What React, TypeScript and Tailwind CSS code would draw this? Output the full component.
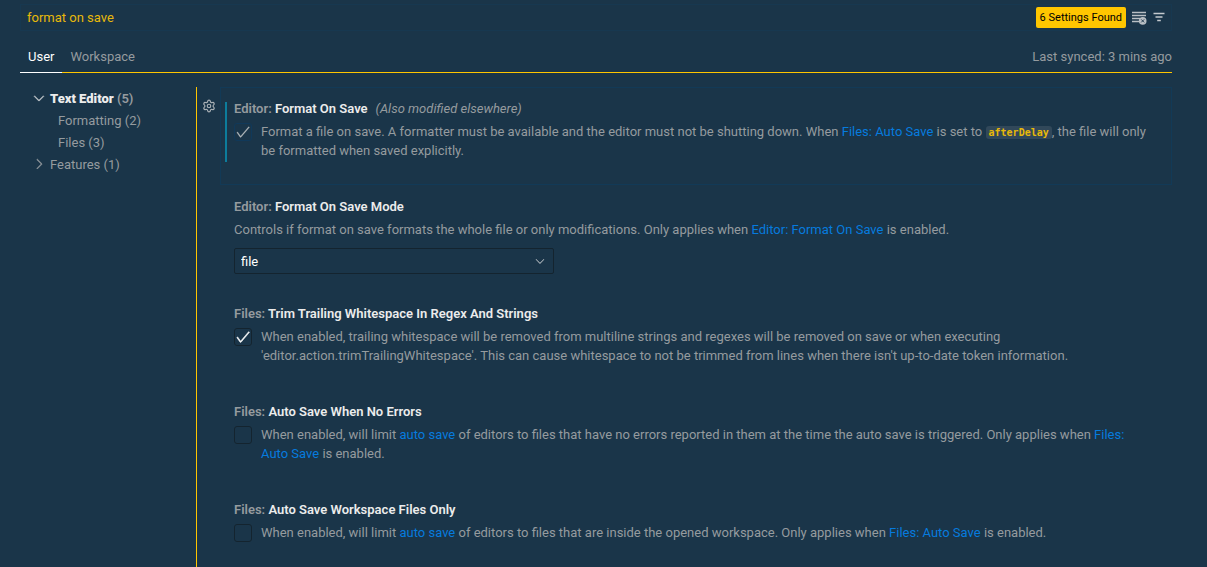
import { useState, type ReactNode } from "react";
import { Settings } from "lucide-react";
import { VscCheck, VscChevronDown, VscChevronRight } from "react-icons/vsc";

function ClearResultsIcon() {
  return (
    <svg width="16" height="16" viewBox="0 0 16 16" fill="none" stroke="currentColor" strokeWidth="1.3">
      <path d="M1 2.5h14M1 5.5h14M1 8.5h8M1 11.5h7" />
      <circle cx="11.7" cy="10.9" r="3.8" fill="currentColor" stroke="none" />
      <path d="M10.2 9.4l3 3M13.2 9.4l-3 3" stroke="#1a3549" strokeWidth="0.9" />
    </svg>
  );
}

function FilterLinesIcon() {
  return (
    <svg width="16" height="16" viewBox="0 0 16 16" fill="none" stroke="currentColor" strokeWidth="1.6">
      <path d="M2.5 3.5h11M4.5 7h7M6.2 10.5h3.6" />
    </svg>
  );
}

function Link({ children }: { children: ReactNode }) {
  return (
    <a href="#" className="text-[#067bde] hover:underline">
      {children}
    </a>
  );
}

function Title({ group, name, note }: { group: string; name: string; note?: string }) {
  return (
    <h3 className="whitespace-nowrap font-semibold text-[#959b9f]">
      {group}: <span className="text-[#ececec]">{name}</span>
      {note && <em className="ml-2 font-normal text-[#959b9f]">{note}</em>}
    </h3>
  );
}

type CheckSettingProps = {
  id: string;
  group: string;
  name: string;
  note?: string;
  initial?: boolean;
  focused?: boolean;
  children: ReactNode;
};

function CheckSetting({ id, group, name, note, initial = false, focused = false, children }: CheckSettingProps) {
  const [checked, setChecked] = useState(initial);
  const box = focused ? "border-[#10395a]" : "border-[#14242f]";
  const tick = focused ? "text-[#b9bdc0]" : "text-white";
  return (
    <section
      className={
        focused
          ? "relative border border-[#123a57] pt-[11px] pr-5 pb-6 pl-[13px]"
          : "relative border-x border-transparent pt-3 pr-5 pb-[25px] pl-[13px]"
      }
    >
      {focused && <span className="absolute top-[14px] left-1 h-15 w-[2px] bg-[#0c7d9d]" />}
      <Title group={group} name={name} note={note} />
      <div className="mt-1 flex gap-[9px]">
        <span className="mt-px grid size-[18px] shrink-0">
          <input
            id={id}
            type="checkbox"
            checked={checked}
            onChange={(e) => setChecked(e.target.checked)}
            className={`col-start-1 row-start-1 size-[18px] appearance-none rounded-[3px] border ${box}`}
          />
          {checked && (
            <VscCheck
              size={16}
              strokeWidth={focused ? 0.3 : 0.6}
              className={`pointer-events-none col-start-1 row-start-1 place-self-center ${tick}`}
            />
          )}
        </span>
        <label htmlFor={id} className="min-w-0">
          {children}
        </label>
      </div>
    </section>
  );
}

const treeRow = "flex h-[22px] items-center whitespace-nowrap";

export default function App() {
  const [query, setQuery] = useState("format on save");
  return (
    <div className="flex min-h-screen flex-col bg-[#1a3549] pr-[35px] pl-5 font-['Roboto','Open_Sans',sans-serif] text-[13px] leading-[19px] text-[#959b9f]">
      <header className="pt-1">
        <div className="flex h-[27px] items-center border border-[#173850] pr-1 pl-[6px]">
          <input
            aria-label="Search settings"
            value={query}
            onChange={(e) => setQuery(e.target.value)}
            className="min-w-0 flex-1 bg-transparent text-[#e8b909] outline-none"
          />
          <span className="rounded-[2px] bg-[#ffc600] px-1 py-px text-[11px] whitespace-nowrap text-black">
            6 Settings Found
          </span>
          <button aria-label="Clear search" className="ml-[5px] text-[#b9bfc4]">
            <ClearResultsIcon />
          </button>
          <button aria-label="Filter settings" className="ml-1 text-[#c4c9cd]">
            <FilterLinesIcon />
          </button>
        </div>
        <div className="mt-[10px] flex border-b border-[#ffc600]">
          <button className="-mb-px h-8 border-b border-white px-2 text-white">User</button>
          <button className="h-[31px] px-2">Workspace</button>
          <span className="ml-auto self-center">Last synced: 3 mins ago</span>
        </div>
      </header>

      <div className="mt-[14px] flex flex-1">
        <nav aria-label="Settings categories" className="w-[176px] shrink-0 pl-[11px]">
          <div className={treeRow}>
            <VscChevronDown size={16} strokeWidth={0.4} className="mr-[3px] text-[#c8ccd0]" />
            <span className="font-semibold">
              <b className="text-[#ececec]">Text Editor</b> (5)
            </span>
          </div>
          <div className={`${treeRow} pl-[27px]`}>Formatting (2)</div>
          <div className={`${treeRow} pl-[27px]`}>Files (3)</div>
          <div className={treeRow}>
            <VscChevronRight size={16} strokeWidth={0.4} className="mr-[3px]" />
            Features (1)
          </div>
        </nav>

        <main className="flex min-w-0 flex-1 border-l border-[#ffc600]">
          <div className="w-[23px] shrink-0 pt-3 pl-[5px]">
            <button aria-label="More actions" className="block text-[#a9b0b5]">
              <Settings size={14} strokeWidth={2} />
            </button>
          </div>
          <div className="min-w-0 flex-1">
            <CheckSetting
              id="format-on-save"
              group="Editor"
              name="Format On Save"
              note="(Also modified elsewhere)"
              initial
              focused
            >
              Format a file on save. A formatter must be available and the editor must not be shutting down. When{" "}
              <Link>Files: Auto Save</Link> is set to{" "}
              <code className="rounded-[3px] bg-[#31485a] px-[3px] py-px font-['DejaVu_Sans_Mono',monospace] text-[10px] leading-none font-bold text-[#e8b909]">
                afterDelay
              </code>
              , the file will only be formatted when saved explicitly.
            </CheckSetting>

            <section className="pt-3 pr-5 pb-[18px] pl-[14px]">
              <Title group="Editor" name="Format On Save Mode" />
              <label htmlFor="save-mode" className="mt-1 block">
                Controls if format on save formats the whole file or only modifications. Only applies when{" "}
                <Link>Editor: Format On Save</Link> is enabled.
              </label>
              <div className="mt-[9px] grid w-80 max-w-full">
                <select
                  id="save-mode"
                  className="col-start-1 row-start-1 h-[26px] appearance-none rounded-[2px] border border-[#14242f] bg-[#1a3549] px-[6px] text-white"
                >
                  <option>file</option>
                  <option>modifications</option>
                  <option>modificationsIfAvailable</option>
                </select>
                <VscChevronDown
                  size={14}
                  className="pointer-events-none col-start-1 row-start-1 mr-[7px] self-center justify-self-end text-[#b9bfc4]"
                />
              </div>
            </section>

            <CheckSetting id="trim-regex" group="Files" name="Trim Trailing Whitespace In Regex And Strings" initial>
              When enabled, trailing whitespace will be removed from multiline strings and regexes will be removed on
              save or when executing 'editor.action.trimTrailingWhitespace'. This can cause whitespace to not be trimmed
              from lines when there isn't up-to-date token information.
            </CheckSetting>

            <CheckSetting id="no-errors" group="Files" name="Auto Save When No Errors">
              When enabled, will limit <Link>auto save</Link> of editors to files that have no errors reported in them
              at the time the auto save is triggered. Only applies when <Link>Files: Auto Save</Link> is enabled.
            </CheckSetting>

            <CheckSetting id="workspace-only" group="Files" name="Auto Save Workspace Files Only">
              When enabled, will limit <Link>auto save</Link> of editors to files that are inside the opened workspace.
              Only applies when <Link>Files: Auto Save</Link> is enabled.
            </CheckSetting>
          </div>
        </main>
      </div>
    </div>
  );
}
